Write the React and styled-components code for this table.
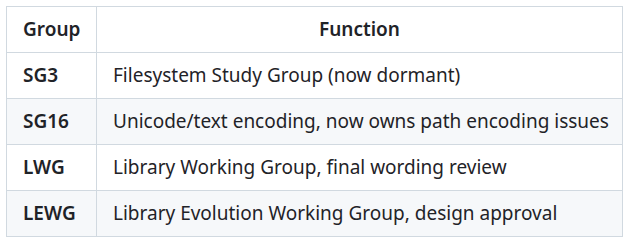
import React from "react";
import styled, { createGlobalStyle } from "styled-components";

const Global = createGlobalStyle`
  html, body { margin: 0; padding: 0; background: #ffffff; }
  body { font-family: "Noto Sans", "Open Sans", sans-serif; color: #1f2328; }
`;

const Page = styled.div`
  padding: 6px;
`;

const Table = styled.table`
  border-collapse: collapse;
  table-layout: fixed;
  width: 616px;
  font-size: 19px;
  line-height: 27px;
`;

const Col = styled.col`
  width: ${(p) => p.$w}px;
`;

const Row = styled.tr`
  background: ${(p) => (p.$shaded ? "#f6f8fa" : "#ffffff")};
`;

const Head = styled.th`
  border: 1px solid #d1d9e0;
  padding: 9px 16px;
  font-weight: 600;
  text-align: ${(p) => p.$align || "left"};
  white-space: nowrap;
`;

const Cell = styled.td`
  border: 1px solid #d1d9e0;
  padding: 9px 16px;
  font-weight: ${(p) => (p.$bold ? 600 : 400)};
  white-space: nowrap;
`;

const rows = [
  ["SG3", "Filesystem Study Group (now dormant)"],
  ["SG16", "Unicode/text encoding, now owns path encoding issues"],
  ["LWG", "Library Working Group, final wording review"],
  ["LEWG", "Library Evolution Working Group, design approval"],
];

export default function App() {
  return (
    <Page>
      <Global />
      <Table>
        <colgroup>
          <Col $w={90} />
          <Col $w={526} />
        </colgroup>
        <thead>
          <Row>
            <Head>Group</Head>
            <Head $align="center">Function</Head>
          </Row>
        </thead>
        <tbody>
          {rows.map(([g, f], i) => (
            <Row key={g} $shaded={i % 2 === 1}>
              <Cell $bold>{g}</Cell>
              <Cell>{f}</Cell>
            </Row>
          ))}
        </tbody>
      </Table>
    </Page>
  );
}
